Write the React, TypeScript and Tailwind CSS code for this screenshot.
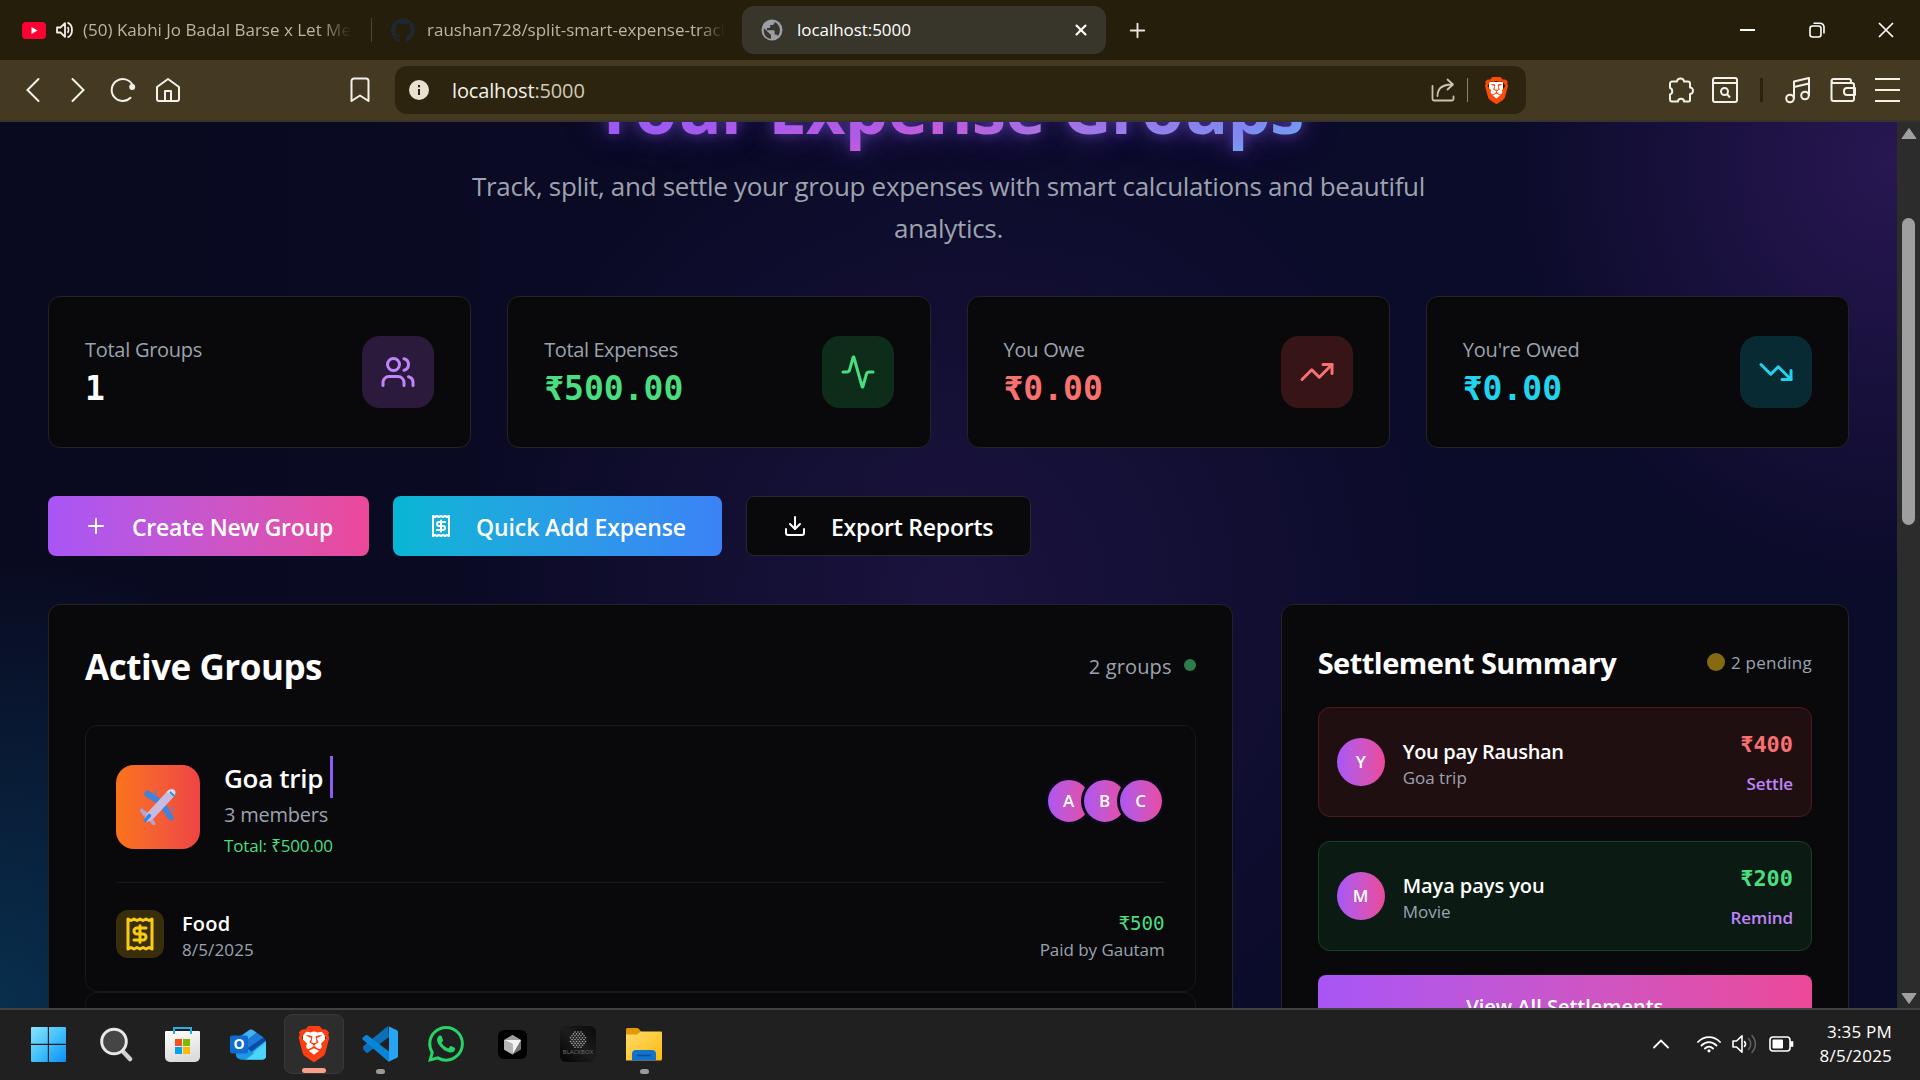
import React, { ReactNode } from "react";
import { Activity, Download, Plus, TrendingDown, TrendingUp, Users, X } from "lucide-react";
import { SiBrave, SiGithub, SiWhatsapp } from "react-icons/si";

function ReceiptIcon({ className }: { className: string }) {
  return (
    <svg viewBox="0 0 24 24" fill="none" stroke="currentColor" strokeWidth="2" strokeLinecap="round" strokeLinejoin="round" className={className}>
      <path d="M4 2v20l2-1 2 1 2-1 2 1 2-1 2 1 2-1 2 1V2l-2 1-2-1-2 1-2-1-2 1-2-1-2 1Z" />
      <path d="M16 8h-6a2 2 0 1 0 0 4h4a2 2 0 1 1 0 4H8" />
      <path d="M12 17.5v-11" />
    </svg>
  );
}

/* ---------- Browser chrome ---------- */

function TabStrip() {
  return (
    <div className="flex h-[60px] items-center bg-[#241e0a] text-[17px] text-[#b9b5a8]">
      <div className="flex w-[371px] items-center pl-[22px]">
        <svg viewBox="0 0 24 17" className="h-[17px] w-6 shrink-0">
          <rect width="24" height="17" rx="4" fill="#ff0033" />
          <path d="M9.5 5v7l6-3.500z" fill="#fff" />
        </svg>
        <svg viewBox="0 0 18 18" className="ml-[10px] h-[18px] w-[18px] shrink-0" fill="none" stroke="#f1efe8" strokeWidth="1.8">
          <path d="M1 6.5h3.5L9 2.2v13.6L4.500 11.500H1z" strokeLinejoin="round" />
          <path d="M11.500 6.200c1.300 1.500 1.300 4.100 0 5.600M11.500 1.600c6 2 6 12.800 0 14.800" />
        </svg>
        <div className="ml-[9px] w-[268px] overflow-hidden whitespace-nowrap [mask-image:linear-gradient(to_right,black_88%,transparent)]">
          (50) Kabhi Jo Badal Barse x Let Me
        </div>
      </div>
      <div className="h-6 w-px bg-[#4a4433]" />
      <div className="flex w-[370px] items-center pl-[19px]">
        <SiGithub className="h-6 w-6 shrink-0 text-[#1f2830]" />
        <div className="ml-3 w-[298px] overflow-hidden whitespace-nowrap [mask-image:linear-gradient(to_right,black_91%,transparent)]">
          raushan728/split-smart-expense-tracker
        </div>
      </div>
      <div className="flex h-12 w-[364px] items-center rounded-xl bg-[#38352b] pr-4 pl-[19px] text-white">
        <svg viewBox="0 0 22 22" className="h-[22px] w-[22px]">
          <circle cx="11" cy="11" r="10.500" fill="#9aa0a6" />
          <path d="M3 9.200l5.500 5.300c.8.8 1.500 1 1.500 2.200v3C5.500 19.500 1.800 15.300 3 9.200zM13.500 3v.8c0 1.200-1 2.200-2.200 2.200H9.200v2c0 .6-.5 1-1.100 1H6v2.200h6.500c.6 0 1.100.5 1.100 1.100v3.200h1.100c1 0 1.800.6 2.100 1.500 3.900-4.400 2.200-12-3.300-14z" fill="#38352b" />
        </svg>
        <span className="ml-[14px] tracking-[-0.05px]">localhost:5000</span>
        <X className="ml-auto h-[18px] w-[18px]" strokeWidth={2.8} />
      </div>
      <Plus className="ml-5 h-[23px] w-[23px] text-[#e8e5dc]" strokeWidth={2} />
      <div className="ml-auto flex items-center text-white">
        <div className="h-[2px] w-[15px] bg-white" />
        <svg viewBox="0 0 16 16" className="ml-[54px] h-4 w-4" fill="none" stroke="currentColor" strokeWidth="1.6">
          <rect x="1" y="4" width="11" height="11" rx="2.500" />
          <path d="M4.500 1.200H11A4 4 0 0 1 15 5.200v6.300" />
        </svg>
        <svg viewBox="0 0 16 16" className="mr-[26px] ml-[53px] h-4 w-4" stroke="currentColor" strokeWidth="1.7">
          <path d="M1 1l14 14M15 1L1 15" />
        </svg>
      </div>
    </div>
  );
}

function Toolbar() {
  return (
    <div className="flex h-[62px] items-center border-b-2 border-[#37342c] bg-[#433a21] text-[#f3f1ea]">
      <svg viewBox="0 0 14 28" className="ml-[26px] h-7 w-[14px]" fill="none" stroke="currentColor" strokeWidth="2" strokeLinecap="round">
        <path d="M12.500 3L1.500 14l11 11" />
      </svg>
      <svg viewBox="0 0 14 28" className="ml-[31px] h-7 w-[14px]" fill="none" stroke="currentColor" strokeWidth="2" strokeLinecap="round">
        <path d="M1.500 3l11 11-11 11" />
      </svg>
      <svg viewBox="0 0 27 26" className="ml-[25px] h-[26px] w-[27px]" fill="none" stroke="currentColor" strokeWidth="2" strokeLinecap="round">
        <path d="M22.500 8A11 11 0 1 0 20.500 20.800" />
        <circle cx="22.200" cy="10" r="3" fill="currentColor" stroke="none" />
      </svg>
      <svg viewBox="0 0 24 26" className="ml-[19px] h-[26px] w-6" fill="none" stroke="currentColor" strokeWidth="2" strokeLinejoin="round">
        <path d="M1 10L12 2l11 8v12a2 2 0 0 1-2 2H3a2 2 0 0 1-2-2zM9 24V14h6v10" />
      </svg>
      <svg viewBox="0 0 20 26" className="ml-[170px] h-[26px] w-5" fill="none" stroke="currentColor" strokeWidth="2" strokeLinejoin="round">
        <path d="M1.500 24V4a2.500 2.500 0 0 1 2.500-2.500h12A2.500 2.500 0 0 1 18.500 4v20L10 18.500z" />
      </svg>
      <div className="ml-[25px] flex h-12 w-[1131px] items-center rounded-xl bg-[#2c240e] pr-[18px] pl-[14px]">
        <div className="flex h-5 w-5 items-center justify-center rounded-full bg-[#e8e0d0]">
          <svg viewBox="0 0 20 20" className="h-5 w-5" fill="#2c240e">
            <rect x="9" y="9" width="2" height="6" />
            <rect x="9" y="5" width="2" height="2.300" />
          </svg>
        </div>
        <span className="ml-[23px] pt-px text-[20px] tracking-[-0.15px]">
          localhost<span className="text-[#cfcab8]">:5000</span>
        </span>
        <svg viewBox="0 0 24 24" className="ml-auto h-6 w-6" fill="none" stroke="#c9c3b0" strokeWidth="1.8" strokeLinecap="round" strokeLinejoin="round">
          <path d="M1.500 8v13a1.500 1.500 0 0 0 1.500 1.500h18a1.500 1.500 0 0 0 1.500-1.500v-2.500" />
          <path d="M6.500 18C6.500 11 11 6.500 21 6.500M16.500 1.500l5.500 5-5.500 5" />
        </svg>
        <div className="ml-3 h-6 w-px bg-[#8a8472]" />
        <div className="relative ml-4 flex h-[27px] w-6 items-center justify-center">
          <div className="absolute inset-x-[5px] inset-y-[5px] rounded-b-full bg-white" />
          <SiBrave className="relative h-[27px] w-[27px] shrink-0 text-[#fb4a09]" />
        </div>
      </div>
      <div className="ml-auto flex items-center pr-5">
        <svg viewBox="0 0 26 26" className="h-[26px] w-[26px]" fill="none" stroke="currentColor" strokeWidth="2" strokeLinejoin="round">
          <path d="M9 4.500a3.500 3 0 0 1 7 0H20a2 2 0 0 1 2 2V10.500a3 3.300 0 0 1 0 6.600V23a1.500 1.500 0 0 1-1.500 1.500H16a2.800 2.500 0 0 0-6 0H4A2 2 0 0 1 2 22.500V17.500a3.200 3.400 0 0 0 0-6.500V6.500a2 2 0 0 1 2-2z" />
        </svg>
        <svg viewBox="0 0 26 26" className="ml-[18px] h-[26px] w-[26px]" fill="none" stroke="currentColor" strokeWidth="2">
          <rect x="1" y="1" width="24" height="24" rx="2" />
          <path d="M1 6h24" />
          <circle cx="12.500" cy="14.500" r="3.500" />
          <path d="M15 17l3 3.500" />
        </svg>
        <div className="ml-[22px] h-6 w-[3px] bg-[#2a220c]" />
        <svg viewBox="0 0 26 28" className="ml-[22px] h-7 w-[26px]" fill="none" stroke="currentColor" strokeWidth="2" strokeLinejoin="round">
          <circle cx="5" cy="22.500" r="3.800" />
          <circle cx="20" cy="19.500" r="3.800" />
          <path d="M9 22.500V5.500L24 2v17.500M9 11l15-3.500" />
        </svg>
        <svg viewBox="0 0 26 26" className="ml-[19px] h-[26px] w-[26px]" fill="none" stroke="currentColor" strokeWidth="2" strokeLinejoin="round">
          <path d="M1.500 4A2.500 2.500 0 0 0 4 6h18a2 2 0 0 1 2 2v14a2 2 0 0 1-2 2H3.500a2 2 0 0 1-2-2V4A2.300 2.300 0 0 1 4 2h15a2 2 0 0 1 2 2v2" />
          <path d="M25 11h-8a3 3 0 0 0-3 3v1a3 3 0 0 0 3 3h8z" />
        </svg>
        <div className="ml-[19px] flex w-[25px] flex-col gap-[9px]">
          <div className="h-[2px] bg-[#f3f1ea]" />
          <div className="h-[2px] bg-[#f3f1ea]" />
          <div className="h-[2px] bg-[#f3f1ea]" />
        </div>
      </div>
    </div>
  );
}

/* ---------- Page content ---------- */

interface StatProps {
  label: string;
  labelClass: string;
  value: string;
  valueClass: string;
  box: string;
  icon: ReactNode;
}

function StatCard({ label, labelClass, value, valueClass, box, icon }: StatProps) {
  return (
    <div className="flex h-[152px] items-center justify-between rounded-xl border border-[#242427] bg-[#09090b] px-9">
      <div className="pt-[3px]">
        <div className={`text-[20px] leading-[30px] text-[#9ca3af] ${labelClass}`}>{label}</div>
        <div className={`font-['DejaVu_Sans_Mono',monospace] text-[33px] leading-[48px] font-bold ${valueClass}`}>{value}</div>
      </div>
      <div className={`flex h-[72px] w-[72px] items-center justify-center rounded-[18px] ${box}`}>{icon}</div>
    </div>
  );
}

const stats: StatProps[] = [
  { label: "Total Groups", labelClass: "tracking-[-0.27px]", value: "1", valueClass: "text-white", box: "bg-[#2b1a3c]", icon: <Users className="h-9 w-9 text-[#c084fc]" /> },
  { label: "Total Expenses", labelClass: "tracking-[-0.4px]", value: "₹500.00", valueClass: "text-[#4ade80]", box: "bg-[#0d2d1a]", icon: <Activity className="h-9 w-9 text-[#4ade80]" /> },
  { label: "You Owe", labelClass: "tracking-[-0.25px]", value: "₹0.00", valueClass: "text-[#f87171]", box: "bg-[#371517]", icon: <TrendingUp className="h-9 w-9 text-[#f87171]" /> },
  { label: "You're Owed", labelClass: "tracking-[-0.2px]", value: "₹0.00", valueClass: "text-[#22d3ee]", box: "bg-[#082b33]", icon: <TrendingDown className="h-9 w-9 text-[#22d3ee]" /> },
];

function PlaneIcon() {
  return (
    <svg viewBox="0 0 36 36" className="h-9 w-9" strokeLinejoin="round">
      <circle cx="15.500" cy="3.500" r="1.800" fill="#7d7f96" />
      <circle cx="33" cy="20" r="1.800" fill="#7d7f96" />
      <path d="M22 11L8.500 2.300c-2-.8-4 .6-3.700 2.900L5.500 7 17 14zM25 14l8.300 14.500c.6 2-.8 3-2.500 2.400l-2-1L21.500 19z" fill="#3f83dc" stroke="#3f83dc" />
      <path d="M8 24.500L1.800 20c-1.300-.3-1.700.8-1.300 2L4 27zM11.500 28l3.500 6.500c.2 1.300-1 1.700-2 1.200L9 31z" fill="#b3a3d6" stroke="#b3a3d6" />
      <path d="M27 2.500c2.500-2.500 6-2.800 7.500-1.300s1 4.800-1.500 7.300L14 29c-3 2.800-7.500 5-9.300 3.300S5.500 26 8.500 22.500z" fill="#c9bbe0" />
      <path d="M27 2.500c2.500-2.500 6-2.800 7.500-1.300s.8 4-.8 6.200L26.500 3z" fill="#e3dbee" />
      <path d="M30.500 3.500l3.300 3" stroke="#1e9be0" strokeWidth="2.200" strokeLinecap="round" />
      <path d="M9.500 26.500l-4.300 4.800" stroke="#2f86e6" strokeWidth="3.400" strokeLinecap="round" />
    </svg>
  );
}

function ActiveGroups() {
  return (
    <section className="col-span-2 rounded-xl border border-[#242427] bg-[#09090b] px-9">
      <div className="flex h-[120px] items-center justify-between">
        <h2 className="pt-1 text-[35px] font-bold tracking-[-0.47px] text-white">Active Groups</h2>
        <div className="flex items-center gap-3 pt-[3px] text-[20px] text-[#9ca3af]">
          <span className="tracking-[0.15px]">2 groups</span>
          <span className="mb-[3px] h-3 w-3 rounded-full bg-[#2c7d4a]" />
        </div>
      </div>
      <div className="h-[267px] rounded-xl border border-[#18181b] px-[30px] pt-[30px]">
        <div className="flex h-[127px] border-b border-[#18181b]">
          <div className="mt-[9px] flex h-[84px] w-[84px] items-center justify-center rounded-[18px] bg-linear-to-r from-[#f97316] to-[#ef4444] pb-px">
            <PlaneIcon />
          </div>
          <div className="ml-6">
            <div className="flex h-[42px] items-center text-[26px] leading-[42px] font-semibold tracking-[-0.3px] text-white">
              <span className="pt-[2px]">Goa trip</span>
              <span className="ml-[7px] h-[42px] w-[3px] bg-[#8b5cf6]" />
            </div>
            <div className="mt-[2px] text-[20px] leading-[30px] tracking-[-0.23px] text-[#9ca3af]">3 members</div>
            <div className="mt-[4px] text-[17px] leading-6 tracking-[-0.16px] text-[#4ade80]">Total: ₹500.00</div>
          </div>
          <div className="mt-[21px] ml-auto flex h-12">
            {["A", "B", "C"].map((n) => (
              <div key={n} className="-ml-3 flex h-12 w-12 items-center justify-center rounded-full border-[3px] border-[#0a0a1c] bg-linear-to-r from-[#a855f7] to-[#ec4899] bg-origin-border text-[17px] font-semibold text-white">
                {n}
              </div>
            ))}
          </div>
        </div>
        <div className="flex h-[102px] items-center">
          <div className="flex h-12 w-12 items-center justify-center rounded-xl bg-[#392e0b]">
            <ReceiptIcon className="h-9 w-9 text-[#facc15]" />
          </div>
          <div className="ml-[18px] pt-[3px]">
            <div className="text-[20px] leading-[27px] font-semibold tracking-[0.2px] text-white">Food</div>
            <div className="text-[17px] leading-[25px] tracking-[0.13px] text-[#9ca3af]">8/5/2025</div>
          </div>
          <div className="ml-auto pt-[3px] text-right">
            <div className="font-['DejaVu_Sans_Mono',monospace] text-[19.2px] leading-[27px] text-[#4ade80]">₹500</div>
            <div className="text-[17px] leading-[25px] tracking-[-0.04px] text-[#9ca3af]">Paid by Gautam</div>
          </div>
        </div>
      </div>
      <div className="h-[200px] rounded-xl border border-[#18181b]" />
    </section>
  );
}

interface SettlementProps {
  initial: string;
  title: string;
  titleClass: string;
  group: string;
  value: string;
  valueClass: string;
  action: string;
  card: string;
}

function Settlement({ initial, title, titleClass, group, value, valueClass, action, card }: SettlementProps) {
  return (
    <div className={`flex h-[110px] items-center rounded-xl border px-[18px] ${card}`}>
      <div className="flex h-12 w-12 items-center justify-center rounded-full bg-linear-to-r from-[#a855f7] to-[#ec4899] text-[17px] font-semibold text-white">{initial}</div>
      <div className="ml-[18px] pt-[2px]">
        <div className={`text-[20px] leading-[28px] font-semibold text-white ${titleClass}`}>{title}</div>
        <div className="text-[17px] leading-[23px] text-[#9ca3af]">{group}</div>
      </div>
      <div className="ml-auto pt-[3px] text-right">
        <div className={`font-['DejaVu_Sans_Mono',monospace] text-[21.900px] leading-[38px] font-bold ${valueClass}`}>{value}</div>
        <div className="mt-[3px] text-[17px] leading-[34px] font-semibold tracking-[-0.1px] text-[#c084fc]">{action}</div>
      </div>
    </div>
  );
}

function SettlementSummary() {
  return (
    <section className="rounded-xl border border-[#242427] bg-[#09090b] px-9">
      <div className="flex h-[102px] items-center justify-between pt-[14px]">
        <h2 className="text-[29px] font-bold tracking-[-0.53px] text-white">Settlement Summary</h2>
        <div className="flex items-center gap-[6px] text-[17px] text-[#9ca3af]">
          <span className="mb-[2px] h-[18px] w-[18px] rounded-full bg-[#856a10]" />
          <span className="tracking-[0.25px]">2 pending</span>
        </div>
      </div>
      <div className="flex flex-col gap-6">
        <Settlement initial="Y" title="You pay Raushan" titleClass="tracking-[-0.31px]" group="Goa trip" value="₹400" valueClass="text-[#f87171]" action="Settle" card="border-[#4f191c] bg-[#200f11]" />
        <Settlement initial="M" title="Maya pays you" titleClass="tracking-[-0.07px]" group="Movie" value="₹200" valueClass="text-[#4ade80]" action="Remind" card="border-[#0f4324] bg-[#0b1b13]" />
        <button className="h-[60px] rounded-lg bg-linear-to-r from-[#a855f7] to-[#ec4899] pt-1 text-[20px] font-semibold text-white">View All Settlements</button>
      </div>
    </section>
  );
}

function Page() {
  return (
    <main className="h-[886px] w-[1897px] overflow-hidden bg-[#0a0a24] bg-[radial-gradient(circle_500px_at_950px_470px,rgba(44,28,86,0.48),rgba(44,28,86,0)),radial-gradient(ellipse_380px_420px_at_1890px_40px,rgba(58,30,106,0.62),rgba(58,30,106,0)),radial-gradient(ellipse_420px_460px_at_0px_886px,rgba(8,62,96,0.72),rgba(8,62,96,0)),linear-gradient(90deg,#09091f,#0b0b2a_60%)] px-12">
      <h1 className="mx-auto -mt-[51px] w-[712px] bg-[linear-gradient(135deg,#a05cf8_5%,#dc62d4_50%,#60c4f6_100%)] bg-clip-text pb-4 text-[69px] leading-[72px] font-bold tracking-[-0.95px] whitespace-nowrap text-transparent [text-shadow:0_0_12px_rgba(139,92,246,0.35),0_0_24px_rgba(139,92,246,0.4),0_0_44px_rgba(139,92,246,0.25)]">
        Your Expense Groups
      </h1>
      <p className="mx-auto mt-[6px] w-[1008px] text-center text-[26px] leading-[42px] tracking-[-0.307px] text-[#9ca3af]">
        Track, split, and settle your group expenses with smart calculations and beautiful analytics.
      </p>
      <div className="mt-[47px] grid grid-cols-4 gap-9">
        {stats.map((s) => (
          <StatCard key={s.label} {...s} />
        ))}
      </div>
      <div className="mt-12 flex gap-6 text-[23px] font-semibold text-white">
        <button className="flex h-[60px] w-[321px] items-center rounded-lg bg-linear-to-r from-[#a855f7] to-[#ec4899] pl-9 tracking-[-0.25px]">
          <Plus className="mr-6 h-6 w-6" />
          <span className="pt-[2px]">Create New Group</span>
        </button>
        <button className="flex h-[60px] w-[329px] items-center rounded-lg bg-linear-to-r from-[#06b6d4] to-[#3b82f6] pl-9 tracking-[-0.1px]">
          <ReceiptIcon className="mr-[23px] h-6 w-6" />
          <span className="pt-[2px]">Quick Add Expense</span>
        </button>
        <button className="flex h-[60px] w-[285px] items-center rounded-lg border border-[#27272a] bg-[#09090b] pl-9 tracking-[-0.22px]">
          <Download className="mr-6 h-6 w-6" />
          <span className="pt-[2px]">Export Reports</span>
        </button>
      </div>
      <div className="mt-12 grid grid-cols-3 gap-12">
        <ActiveGroups />
        <SettlementSummary />
      </div>
    </main>
  );
}

function Scrollbar() {
  return (
    <div className="flex w-[23px] flex-col items-center bg-[#2c2c2c] pt-[6px] pb-[4px]">
      <svg viewBox="0 0 16 11" className="h-[11px] w-4" fill="#9f9f9f">
        <path d="M8 0.500L15 10.500H1z" stroke="#9f9f9f" strokeLinejoin="round" />
      </svg>
      <div className="mt-[79px] h-[307px] w-[13px] rounded-full bg-[#9f9f9f]" />
      <svg viewBox="0 0 16 11" className="mt-auto h-[11px] w-4" fill="#9f9f9f">
        <path d="M8 10.500L15 0.500H1z" stroke="#9f9f9f" strokeLinejoin="round" />
      </svg>
    </div>
  );
}

/* ---------- Taskbar ---------- */

function WindowsLogo() {
  return (
    <svg viewBox="0 0 35 35" className="mr-[3px] h-[35px] w-[35px]">
      <defs>
        <linearGradient id="win" x1="0" y1="0" x2="1" y2="1">
          <stop offset="0" stopColor="#8be3ff" />
          <stop offset="0.5" stopColor="#43c2fb" />
          <stop offset="1" stopColor="#0a8ff5" />
        </linearGradient>
      </defs>
      <path d="M1 0h15.800v16.800H0V1a1 1 0 0 1 1-1zM18 0h16a1 1 0 0 1 1 1v15.800H18zM0 18h16.800v17H1a1 1 0 0 1-1-1zM18 18h17v16a1 1 0 0 1-1 1H18z" fill="url(#win)" />
    </svg>
  );
}

function SearchGlyph() {
  return (
    <svg viewBox="0 0 34 35" className="ml-[2px] h-[35px] w-[34px]">
      <path d="M22.500 24l7.500 8" stroke="#cdd0d4" strokeWidth="4.500" strokeLinecap="round" />
      <circle cx="14" cy="14.500" r="12.300" fill="#454545" stroke="#e6e7e9" strokeWidth="3" />
    </svg>
  );
}

function StoreIcon() {
  return (
    <svg viewBox="0 0 35 35" className="h-[35px] w-[35px]">
      <defs>
        <linearGradient id="store" x1="0" y1="0" x2="0.3" y2="1">
          <stop offset="0" stopColor="#ffffff" />
          <stop offset="1" stopColor="#dcdcdc" />
        </linearGradient>
      </defs>
      <path d="M0 5a1 1 0 0 1 1-1h33a1 1 0 0 1 1 1v25a5 5 0 0 1-5 5H5a5 5 0 0 1-5-5z" fill="url(#store)" />
      <path d="M9 7V1h17v6" fill="none" stroke="#27aee6" strokeWidth="2" />
      <path d="M10 12h7v7h-7z" fill="#f25022" />
      <path d="M18 12h7v7h-7z" fill="#7fba00" />
      <path d="M10 20h7v7h-7z" fill="#00a4ef" />
      <path d="M18 20h7v7h-7z" fill="#ffb900" />
    </svg>
  );
}

function OutlookIcon() {
  return (
    <div className="relative h-[31px] w-9">
      <svg viewBox="0 0 36 31" className="h-[31px] w-9">
        <path d="M7 9L19.500.8a3 3 0 0 1 3 0L33 8l3 5v13.500A4 4 0 0 1 32 30.500H11a5 5 0 0 1-5-5z" fill="#1a74d0" />
        <path d="M9 9L19.500 1a3 3 0 0 1 3 0l4 2.600L13 14z" fill="#41b4ee" />
        <path d="M14 14L27 4.500l6 4L18 20z" fill="#1d7bd8" />
        <path d="M18 19L33.500 8.500l2.500 3L20 23z" fill="#0a4aa8" />
        <path d="M36 12v14.500a4 4 0 0 1-4 4H13.500z" fill="#40cdf5" />
        <path d="M6 21l12-1 14 10.500H11a5 5 0 0 1-5-5z" fill="#1e96e0" />
        <path d="M16 30.500L36 15v11.500a4 4 0 0 1-4 4z" fill="#4bd5f8" />
        <rect y="6.500" width="18" height="18" rx="2" fill="#0f6cd0" />
      </svg>
      <span className="absolute top-[6.500px] left-0 w-[18px] text-center text-[14px] leading-[18px] font-bold text-white">O</span>
    </div>
  );
}

function VsCodeIcon() {
  return (
    <svg viewBox="0 0 36 36" className="h-9 w-9">
      <path d="M26 0L1 20.500v2.500l3 3.500a1.800 1.800 0 0 0 2.200 0L27 11z" fill="#0d6fb8" />
      <path d="M5.500 9.300L27 25.500V36L.9 13.800a1.600 1.600 0 0 1 0-2.300l2.300-2.100a2 2 0 0 1 2.300-.1z" fill="#0a86d8" />
      <path d="M26 0l9 4.200a2 2 0 0 1 1 1.800v24a2 2 0 0 1-1 1.800L26 36c.6-.4 1-1 1-2V2c0-1-.4-1.600-1-2z" fill="#27a5f3" />
    </svg>
  );
}

function CursorIcon() {
  return (
    <svg viewBox="0 0 29 29" className="h-[29px] w-[29px]">
      <rect width="29" height="29" rx="6" fill="#000" />
      <path d="M14.500 5l8.500 5v9.500l-8.500 5-8.500-5V10z" fill="#777" />
      <path d="M6 10l8.500-5 8.500 5z" fill="#9c9c9c" />
      <path d="M6 10h17l-8.500 14.500V14z" fill="#f2f2f2" />
      <path d="M6 10l8.500 4v10.500l-8.500-5z" fill="#b5b5b5" />
    </svg>
  );
}

const hexDots = [3, 4, 5, 6, 5, 6, 5, 4, 3];

function BlackboxIcon() {
  return (
    <div className="relative h-9 w-9 overflow-hidden rounded-md bg-linear-to-tr from-[#050505] via-[#1c1c1c] to-[#0a0a0a]">
      <svg viewBox="0 0 36 36" className="h-9 w-9">
        {hexDots.map((n, row) =>
          Array.from({ length: n }, (_, i) => (
            <circle key={`${row}-${i}`} cx={18 + (i - (n - 1) / 2) * 3} cy={6 + row * 1.9} r="0.8" fill="#a8a8a8" />
          )),
        )}
      </svg>
      <span className="absolute top-[22px] left-0 w-9 text-center text-[6px] leading-[8px] text-[#707070]">BLACKBOX</span>
    </div>
  );
}

function FolderIcon() {
  return (
    <svg viewBox="0 0 36 33" className="h-[33px] w-9">
      <defs>
        <linearGradient id="folder" x1="0" y1="0" x2="1" y2="1">
          <stop offset="0" stopColor="#ffdc6b" />
          <stop offset="1" stopColor="#fbb90e" />
        </linearGradient>
      </defs>
      <path d="M0 1.500A1.500 1.500 0 0 1 1.500 0H11a2 2 0 0 1 1.500.6L15.500 4v5H0z" fill="#e19b00" />
      <path d="M0 6.500h11l4-3h20a1 1 0 0 1 1 1V31a1.500 1.500 0 0 1-1.500 1.500H0z" fill="url(#folder)" />
      <path d="M6 32.500V26a4 4 0 0 1 4-4h16a4 4 0 0 1 4 4v6.500z" fill="#1273cb" />
      <path d="M11 27.500h14" stroke="#0b4d96" strokeWidth="1.600" />
    </svg>
  );
}

function Slot({ children, mark }: { children: ReactNode; mark?: boolean }) {
  return (
    <div className="relative flex h-[60px] w-[60px] items-center justify-center">
      {children}
      {mark && <span className="absolute bottom-0 left-[26px] h-[5px] w-[9px] rounded-full bg-[#9a9a9a]" />}
    </div>
  );
}

function Taskbar() {
  return (
    <footer className="flex h-[72px] items-center border-t-2 border-[#414141] bg-[#202020] pb-[2px] text-white">
      <div className="ml-5 flex gap-1.5">
        <Slot><WindowsLogo /></Slot>
        <Slot><SearchGlyph /></Slot>
        <Slot><StoreIcon /></Slot>
        <Slot><OutlookIcon /></Slot>
        <div className="relative flex h-[60px] w-[60px] items-center justify-center rounded-lg border border-[#393939] bg-[#2d2d2d]">
          <div className="absolute top-[16px] left-[18px] h-[24px] w-[22px] rounded-b-full bg-white" />
          <SiBrave className="relative h-[36px] w-[36px] text-[#fb3f12]" />
          <span className="absolute bottom-0 left-[17px] h-[5px] w-6 rounded-full bg-[#f9a088]" />
        </div>
        <Slot mark><VsCodeIcon /></Slot>
        <Slot><SiWhatsapp className="h-9 w-9 text-[#25d366]" /></Slot>
        <Slot><CursorIcon /></Slot>
        <Slot><BlackboxIcon /></Slot>
        <Slot mark><FolderIcon /></Slot>
      </div>
      <div className="ml-auto flex items-center">
        <svg viewBox="0 0 16 10" className="h-[10px] w-4" fill="none" stroke="currentColor" strokeWidth="1.800" strokeLinecap="round">
          <path d="M1 8.500l7-7 7 7" />
        </svg>
        <svg viewBox="0 0 24 18" className="ml-7 h-[18px] w-6" fill="none" stroke="currentColor" strokeWidth="1.800" strokeLinecap="round">
          <path d="M1 7c6-6.500 16-6.500 22 0M4.500 10.500c4.500-4.500 10.500-4.500 15 0M8 13.500c2.500-2.500 5.500-2.500 8 0" />
          <circle cx="12" cy="15.800" r="1.600" fill="currentColor" stroke="none" />
        </svg>
        <svg viewBox="0 0 25 20" className="ml-[11px] h-5 w-[25px]" fill="none" strokeWidth="1.600" strokeLinecap="round" strokeLinejoin="round">
          <path d="M1 7h3.500L10 1.800v16.400L4.500 13H1zM12.500 7.500c1.300 1.500 1.300 3.500 0 5" stroke="#fff" />
          <path d="M16.500 4.500c3 3 3 8 0 11M20 1.500c4.500 5 4.500 12 0 17" stroke="#5e5e5e" />
        </svg>
        <svg viewBox="0 0 25 16" className="ml-[12px] h-4 w-[25px]" fill="none" stroke="currentColor" strokeWidth="1.600">
          <rect x="1" y="1" width="20" height="14" rx="3" />
          <rect x="3.500" y="3.500" width="10.500" height="9" rx="1" fill="currentColor" stroke="none" />
          <path d="M22 6h1.500v4H22z" fill="currentColor" />
        </svg>
        <div className="mr-7 ml-[22px] w-[76px] text-right text-[17px] leading-6 tracking-[0.2px]">
          <div>3:35 PM</div>
          <div>8/5/2025</div>
        </div>
      </div>
    </footer>
  );
}

export default function App() {
  return (
    <div className="h-[1080px] w-[1920px] overflow-hidden bg-[#202020] font-['Open_Sans','Noto_Sans',sans-serif]">
      <TabStrip />
      <Toolbar />
      <div className="flex h-[886px]">
        <Page />
        <Scrollbar />
      </div>
      <Taskbar />
    </div>
  );
}
